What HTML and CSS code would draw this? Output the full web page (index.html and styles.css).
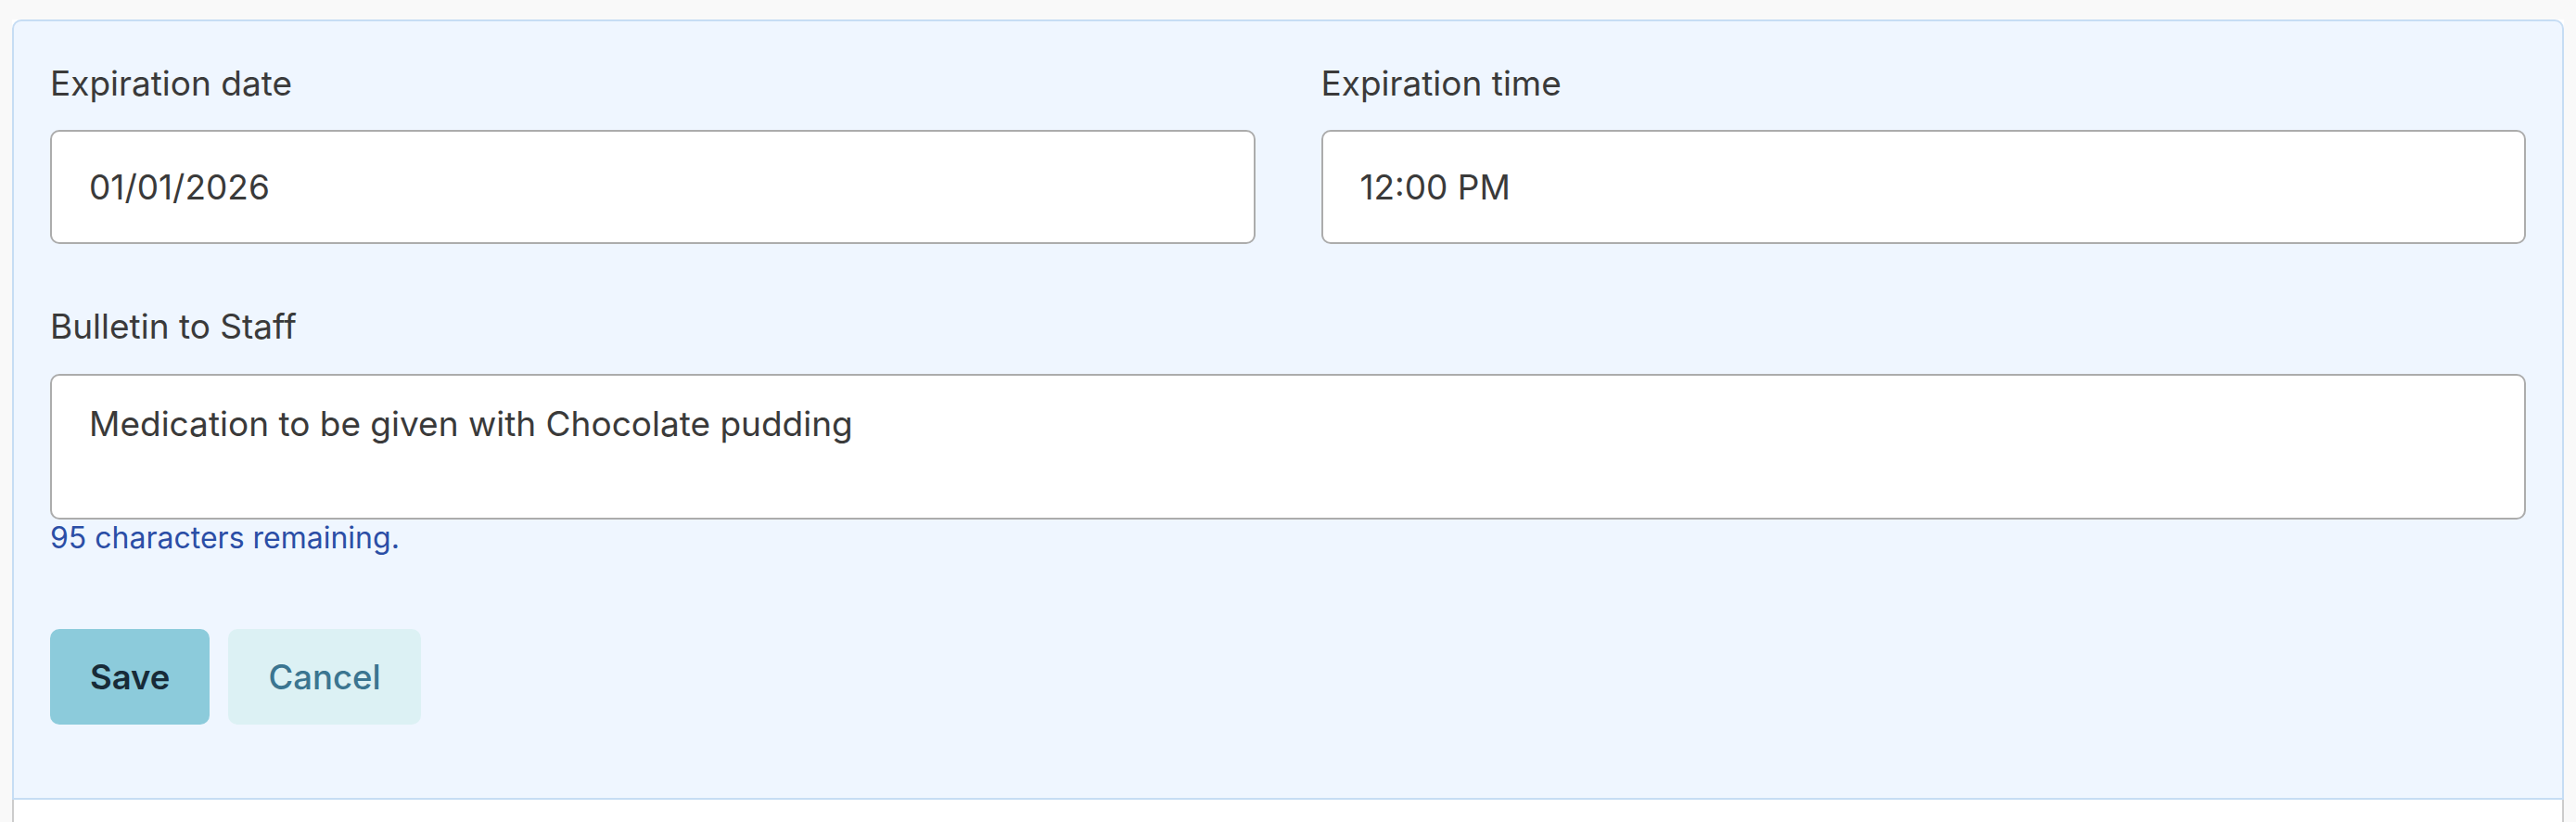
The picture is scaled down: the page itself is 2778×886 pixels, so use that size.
FILE: index.html
```html
<!DOCTYPE html>
<html>
<head>
<meta charset="utf-8">
<link rel="stylesheet" href="styles.css">
</head>
<body>
<div class="page">
  <div class="card">
    <form class="panel">
      <div class="row">
        <div class="field">
          <label class="label">Expiration date</label>
          <div class="input">01/01/2026</div>
        </div>
        <div class="field">
          <label class="label">Expiration time</label>
          <div class="input">12:00 PM</div>
        </div>
      </div>
      <div class="field bulletin">
        <label class="label">Bulletin to Staff</label>
        <div class="textarea">Medication to be given with Chocolate pudding</div>
        <div class="hint">95 characters remaining.</div>
      </div>
      <div class="actions">
        <button type="button" class="btn btn-save">Save</button>
        <button type="button" class="btn btn-cancel">Cancel</button>
      </div>
    </form>
    <div class="card-body"></div>
  </div>
</div>
</body>
</html>
```
FILE: styles.css
```css
html, body {
  margin: 0;
  padding: 0;
  background: #f9f9f9;
  font-family: Inter, "Noto Sans", sans-serif;
  color: #3a3a3a;
}
.page {
  padding: 21px 13px 0 13px;
}
.card {
  background: #ffffff;
}
.panel {
  display: block;
  background: #eff6ff;
  border: 2px solid #c6ddf4;
  border-radius: 10px 10px 0 0;
  padding: 45px 39px 79px 39px;
}
.row {
  display: grid;
  grid-template-columns: 1fr 1fr;
  column-gap: 71px;
}
.field {
  display: flex;
  flex-direction: column;
}
.label {
  font-size: 37px;
  line-height: 44px;
  color: #3a3a3a;
  margin-bottom: 28px;
}
.input {
  height: 119px;
  border: 2px solid #acacac;
  border-radius: 10px;
  background: #fff;
  box-sizing: content-box;
  padding: 0 40px;
  display: flex;
  align-items: center;
  font-size: 37px;
  color: #3a3a3a;
}
.bulletin {
  margin-top: 67px;
}
.bulletin .label {
  margin-bottom: 29px;
}
.textarea {
  border: 2px solid #acacac;
  border-radius: 10px;
  background: #fff;
  padding: 30px 40px 0 40px;
  box-sizing: border-box;
  height: 157px;
  font-size: 37px;
  line-height: 44px;
  color: #3a3a3a;
}
.hint {
  margin-top: 1px;
  font-size: 32px;
  line-height: 38px;
  color: #2b4ea6;
}
.actions {
  display: flex;
  gap: 20px;
  margin-top: 79px;
}
.btn {
  height: 103px;
  border: none;
  border-radius: 10px;
  font-family: Inter, "Noto Sans", sans-serif;
  font-size: 36.5px;
  padding: 0 43px;
  cursor: pointer;
}
.btn-save {
  background: #8ccbdb;
  color: #182b38;
  font-weight: 600;
}
.btn-cancel {
  background: #dcf1f4;
  color: #3b7590;
  font-weight: 500;
}
.card-body {
  height: 40px;
  border-left: 2px solid #cccccc;
  border-right: 2px solid #cccccc;
  background: #fff;
}
```
